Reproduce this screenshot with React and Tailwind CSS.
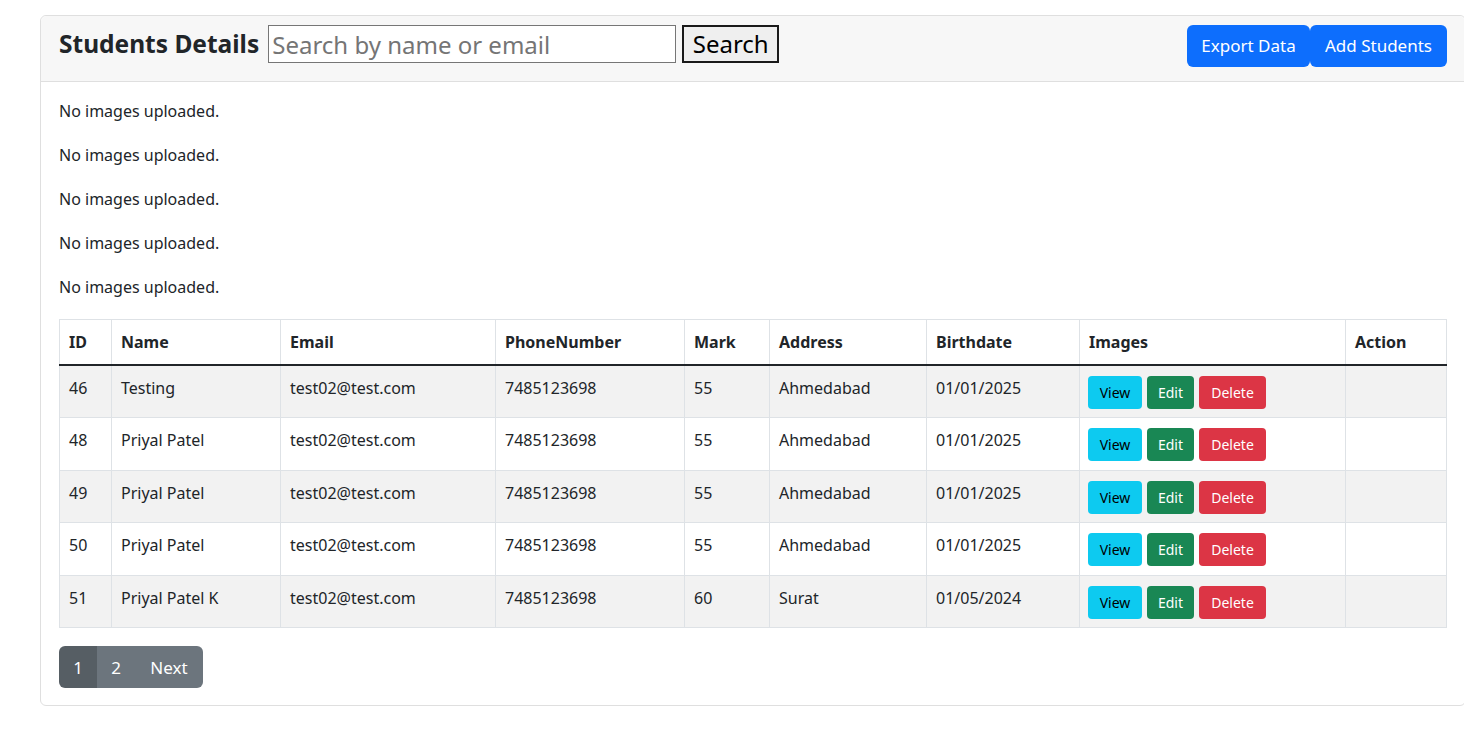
import React from 'react'

const students = [
  { id: 46, name: 'Testing', email: 'test02@test.com', phone: '7485123698', mark: 55, address: 'Ahmedabad', birth: '01/01/2025' },
  { id: 48, name: 'Priyal Patel', email: 'test02@test.com', phone: '7485123698', mark: 55, address: 'Ahmedabad', birth: '01/01/2025' },
  { id: 49, name: 'Priyal Patel', email: 'test02@test.com', phone: '7485123698', mark: 55, address: 'Ahmedabad', birth: '01/01/2025' },
  { id: 50, name: 'Priyal Patel', email: 'test02@test.com', phone: '7485123698', mark: 55, address: 'Ahmedabad', birth: '01/01/2025' },
  { id: 51, name: 'Priyal Patel K', email: 'test02@test.com', phone: '7485123698', mark: 60, address: 'Surat', birth: '01/05/2024' },
]

const heads = ['ID', 'Name', 'Email', 'PhoneNumber', 'Mark', 'Address', 'Birthdate', 'Images', 'Action']
const widths = [52, 169, 215, 189, 85, 157, 153, 266, 101]

export default function App() {
  return (
    <div className="w-[1464px] h-[735px] overflow-hidden bg-white text-[#212529] font-['Noto_Sans',sans-serif] text-[16px]">
      <div className="ml-[40px] mt-[15px] w-[1426px] border border-[#dfdfdf] rounded-[6px]">
        {/* header */}
        <div className="h-[66px] bg-[#f7f7f7] border-b border-[#dfdfdf] rounded-t-[6px] flex items-start justify-between pt-[9px] pl-[18px] pr-[18px]">
          <div className="flex items-center h-[38px]">
            <h4 className="text-[24.5px] font-bold leading-[30px]">Students Details</h4>
            <input
              type="text"
              placeholder="Search by name or email"
              className="ml-[9px] w-[408px] h-[38px] border border-[#767676] bg-white px-[3px] text-[24px] placeholder:text-[#757575] outline-none"
            />
            <button className="ml-[6px] w-[97px] h-[38px] bg-[#efefef] border-2 border-[#1a1a1a] text-[24px] leading-none text-black">Search</button>
          </div>
          <div className="flex items-center">
            <button className="h-[42px] w-[123px] bg-[#0d6efd] text-white text-[17px] rounded-[6px]">Export Data</button>
            <button className="h-[42px] w-[137px] bg-[#0d6efd] text-white text-[17px] rounded-[6px]">Add Students</button>
          </div>
        </div>

        {/* body */}
        <div className="pt-[17px] pl-[18px] pb-[17px]">
          {[0, 1, 2, 3, 4].map(i => (
            <p key={i} className="leading-[24px] mb-[20px]">No images uploaded.</p>
          ))}

          <table className="table-fixed border-collapse w-[1388px]">
            <colgroup>
              {widths.map((w, i) => <col key={i} style={{ width: w }} />)}
            </colgroup>
            <thead>
              <tr className="h-[45.4px]">
                {heads.map(h => (
                  <th key={h} className="border border-[#dee2e6] border-b-2 border-b-[#212529] text-left font-bold px-[9px] align-middle">{h}</th>
                ))}
              </tr>
            </thead>
            <tbody>
              {students.map((s, i) => (
                <tr key={s.id} className={i % 2 === 0 ? 'h-[52.6px] bg-[#f2f2f2]' : 'h-[52.6px] bg-white'}>
                  <td className="border border-[#dee2e6] px-[9px] pt-[10px] align-top leading-[24px]">{s.id}</td>
                  <td className="border border-[#dee2e6] px-[9px] pt-[10px] align-top leading-[24px]">{s.name}</td>
                  <td className="border border-[#dee2e6] px-[9px] pt-[10px] align-top leading-[24px]">{s.email}</td>
                  <td className="border border-[#dee2e6] px-[9px] pt-[10px] align-top leading-[24px]">{s.phone}</td>
                  <td className="border border-[#dee2e6] px-[9px] pt-[10px] align-top leading-[24px]">{s.mark}</td>
                  <td className="border border-[#dee2e6] px-[9px] pt-[10px] align-top leading-[24px]">{s.address}</td>
                  <td className="border border-[#dee2e6] px-[9px] pt-[10px] align-top leading-[24px]">{s.birth}</td>
                  <td className="border border-[#dee2e6] px-[8px] pt-[10px] align-top">
                    <div className="flex gap-[5px] text-[14px]">
                      <button className="h-[33px] w-[54px] rounded-[4px] bg-[#0dcaf0] text-black">View</button>
                      <button className="h-[33px] w-[47px] rounded-[4px] bg-[#198754] text-white">Edit</button>
                      <button className="h-[33px] w-[67px] rounded-[4px] bg-[#dc3545] text-white">Delete</button>
                    </div>
                  </td>
                  <td className="border border-[#dee2e6]"></td>
                </tr>
              ))}
            </tbody>
          </table>

          <div className="flex mt-[18px]">
            <button className="h-[42px] w-[38px] bg-[#565e64] text-white text-[17px] rounded-l-[6px]">1</button>
            <button className="h-[42px] w-[38px] bg-[#6c757d] text-white text-[17px]">2</button>
            <button className="h-[42px] w-[68px] bg-[#6c757d] text-white text-[17px] rounded-r-[6px]">Next</button>
          </div>
        </div>
      </div>
    </div>
  )
}
